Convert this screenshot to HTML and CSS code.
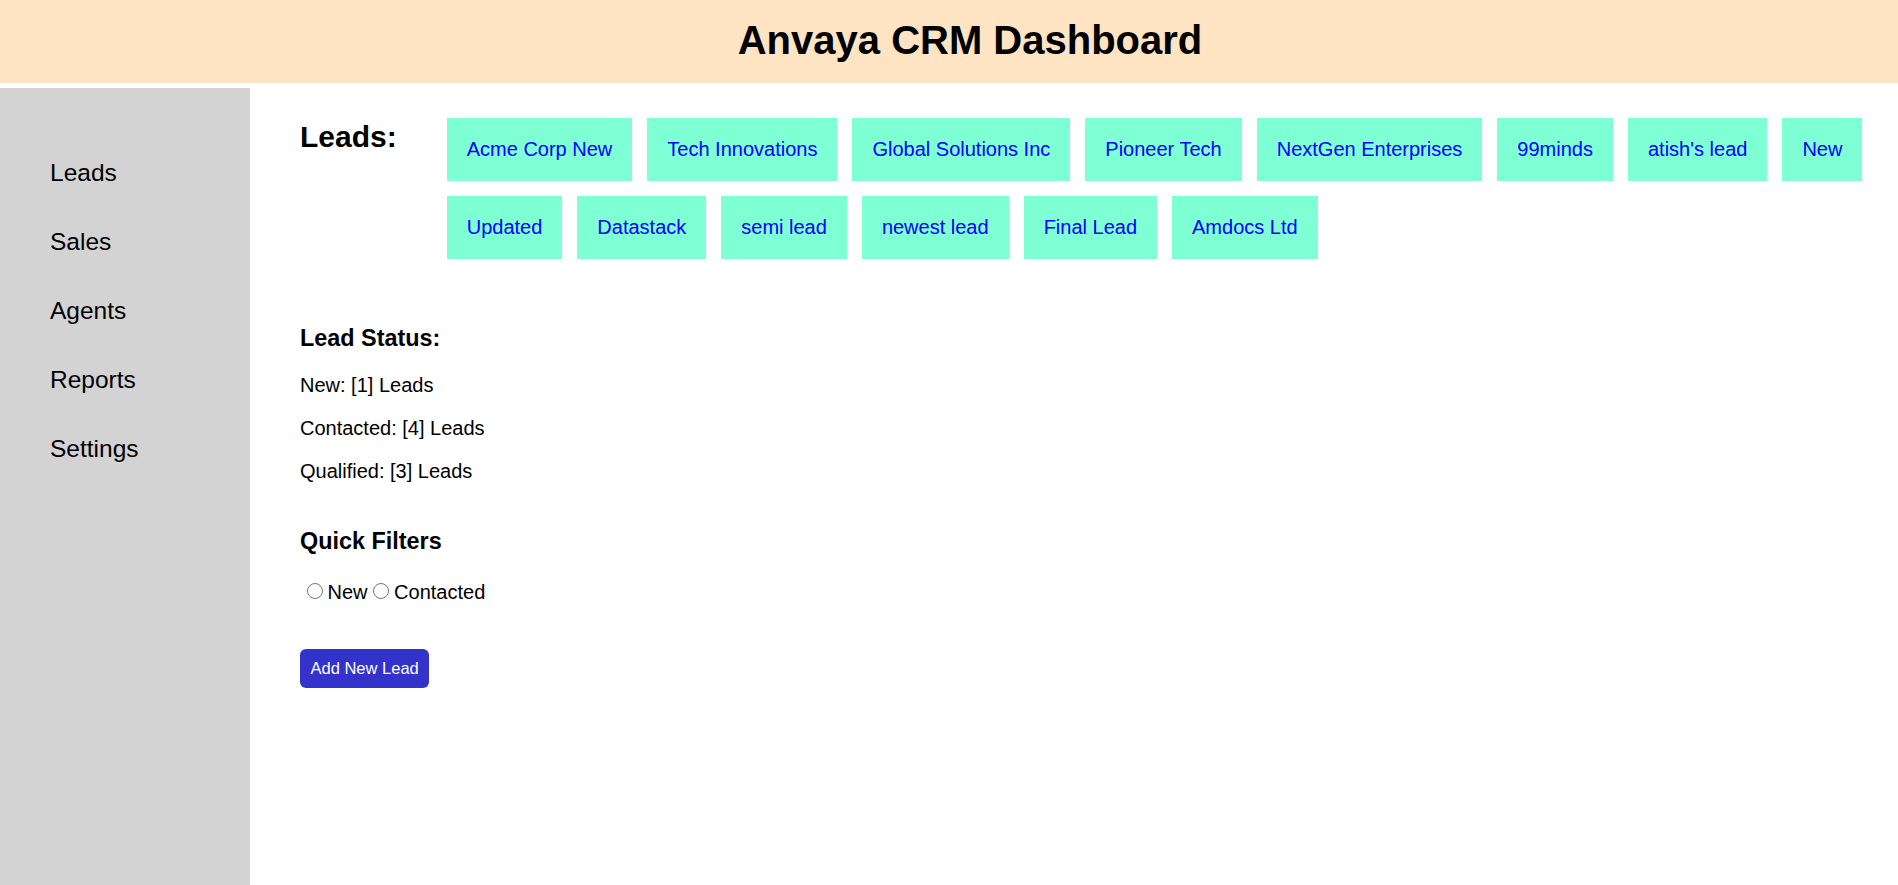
FILE: index.html
```html
<!DOCTYPE html>
<html lang="en">
<head>
<meta charset="utf-8">
<title>Anvaya CRM Dashboard</title>
<link rel="stylesheet" href="styles.css">
</head>
<body>
<header class="topbar">
  <h1 class="title">Anvaya CRM Dashboard</h1>
</header>
<div class="layout">
  <aside class="sidebar">
    <ul class="nav">
      <li>Leads</li>
      <li>Sales</li>
      <li>Agents</li>
      <li>Reports</li>
      <li>Settings</li>
    </ul>
  </aside>
  <main class="main">
    <section class="leads-row">
      <h2 class="leads-title">Leads:</h2>
      <div class="lead-list">
        <a class="lead" href="#">Acme Corp New</a>
        <a class="lead" href="#">Tech Innovations</a>
        <a class="lead" href="#">Global Solutions Inc</a>
        <a class="lead" href="#">Pioneer Tech</a>
        <a class="lead" href="#">NextGen Enterprises</a>
        <a class="lead" href="#">99minds</a>
        <a class="lead" href="#">atish's lead</a>
        <a class="lead" href="#">New</a>
        <a class="lead" href="#">Updated</a>
        <a class="lead" href="#">Datastack</a>
        <a class="lead" href="#">semi lead</a>
        <a class="lead" href="#">newest lead</a>
        <a class="lead" href="#">Final Lead</a>
        <a class="lead" href="#">Amdocs Ltd</a>
      </div>
    </section>
    <section class="status">
      <h3 class="section-title">Lead Status:</h3>
      <p class="line">New: [1] Leads</p>
      <p class="line">Contacted: [4] Leads</p>
      <p class="line">Qualified: [3] Leads</p>
    </section>
    <section class="filters">
      <h3 class="section-title">Quick Filters</h3>
      <p class="line radios"><input class="radio" type="radio" name="filter" id="f-new"><label for="f-new">New</label> <input class="radio" type="radio" name="filter" id="f-contacted"><label for="f-contacted">Contacted</label></p>
    </section>
    <div class="actions">
      <button class="add-btn" type="button">Add New Lead</button>
    </div>
  </main>
</div>
</body>
</html>
```
FILE: styles.css
```css
html, body {
  margin: 0;
  padding: 0;
}
body {
  font-family: "Liberation Sans", Arial, sans-serif;
  font-size: 20px;
  color: #000;
  background: #fff;
}
.topbar {
  background: #ffe4c4;
  height: 83px;
  box-sizing: border-box;
  padding: 17px 0 0 42px;
  text-align: center;
}
.title {
  margin: 0;
  font-size: 40px;
  line-height: 46px;
  font-weight: bold;
}
.layout {
  display: flex;
  margin-top: 5px;
  min-height: calc(100vh - 88px);
}
.sidebar {
  width: 250px;
  flex-shrink: 0;
  background: #d3d3d3;
}
.nav {
  list-style: none;
  margin: 0;
  padding: 49.5px 0 0 50px;
}
.nav li {
  font-size: 24.5px;
  line-height: 29px;
  padding: 20px 0;
}
.main {
  flex: 1;
  padding: 30px 20px 0 50px;
}
.leads-row {
  display: flex;
  align-items: flex-start;
  padding-bottom: 40px;
}
.leads-title {
  margin: 2px 50px 0 0;
  font-size: 30px;
  line-height: 34.5px;
  font-weight: bold;
  flex-shrink: 0;
}
.lead-list {
  flex: 1;
  display: flex;
  flex-wrap: wrap;
  gap: 15px;
}
.lead {
  display: block;
  padding: 20px;
  background: #7fffd4;
  color: #0000ff;
  text-decoration: none;
  font-size: 20px;
  line-height: 23px;
}
.section-title {
  margin: 25.8px 0 22.2px;
  font-size: 23.4px;
  line-height: 27px;
  font-weight: bold;
}
.line {
  margin: 20px 0;
  font-size: 20px;
  line-height: 23px;
}
.status {
  margin-bottom: 45px;
}
.radios {
  margin-top: 25px;
  padding-left: 6.5px;
}
.radio {
  width: 16px;
  height: 16px;
  margin: 3px 5px 0 0;
}
.actions {
  margin-top: 45.5px;
}
.add-btn {
  background: #3333cc;
  color: #fff;
  border: none;
  border-radius: 6px;
  padding: 10px 10.5px;
  font-family: "Liberation Sans", Arial, sans-serif;
  font-size: 16.5px;
  line-height: 19px;
}
```
